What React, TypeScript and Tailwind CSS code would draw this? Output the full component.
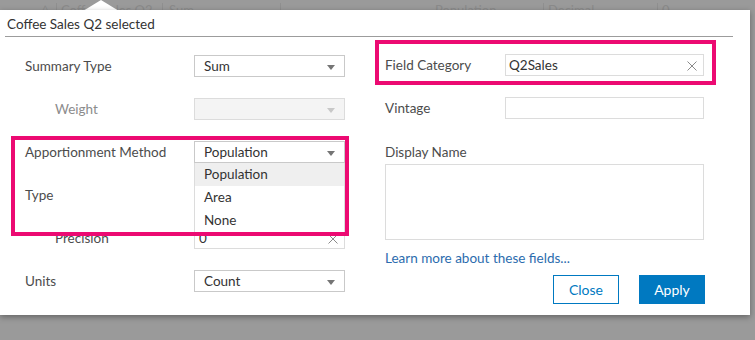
import React from "react";

const font = { fontFamily: "Lato, 'Open Sans', sans-serif" };

function Caret({ light }: { light?: boolean }) {
  return (
    <svg width="8" height="5" viewBox="0 0 8 5" className="absolute right-[9px] top-[9px]">
      <path d="M0 0 L8 0 L4 5 Z" fill={light ? "#c8c8c8" : "#757575"} />
    </svg>
  );
}

function Cross() {
  return (
    <svg width="10" height="10" viewBox="0 0 10 10" className="absolute right-[6px] top-[6px]">
      <path d="M0.5 0.5 L9.5 9.5 M9.5 0.5 L0.5 9.5" stroke="#8a8a8a" strokeWidth="1" />
    </svg>
  );
}

function Select({ value, disabled }: { value?: string; disabled?: boolean }) {
  return (
    <div
      className={`relative h-[22px] w-[151px] border pl-[9px] text-[13.5px] leading-[20px] ${
        disabled ? "border-[#dcdcdc] bg-[#f4f4f4]" : "border-[#c9c9c9] bg-white text-[#333]"
      }`}
    >
      {value}
      <Caret light={disabled} />
    </div>
  );
}

function Row({ label, indent, muted, children }: { label: string; indent?: boolean; muted?: boolean; children: React.ReactNode }) {
  return (
    <div className="flex h-[22px] items-center">
      <div className={`w-[169px] text-[13.5px] ${indent ? "pl-[30px]" : ""} ${muted ? "text-[#8c8c8c]" : "text-[#4c4c4c]"}`}>{label}</div>
      {children}
    </div>
  );
}

export default function App() {
  return (
    <div className="relative h-[340px] w-[755px] overflow-hidden bg-[#9a9a9a]" style={font}>
      {/* faint table behind the popover, cut by the dialog */}
      <div className="flex h-[10px] overflow-hidden pt-[3px] text-[13px] leading-[14px] text-[#8a8a8a]">
        <div className="w-[57px] border-r border-[#8f8f8f] pl-[42px] text-[11px]">^</div>
        <div className="w-[106px] border-r border-[#8f8f8f] pl-[4px]">Coffee Sales Q2 ×</div>
        <div className="w-[118px] border-r border-[#8f8f8f] pl-[6px]">Sum</div>
        <div className="w-[150px] pl-[4px]"></div>
        <div className="w-[113px] border-r border-[#8f8f8f] pl-[4px]">Population</div>
        <div className="w-[114px] border-r border-[#8f8f8f] pl-[4px]">Decimal</div>
        <div className="pl-[4px]">0</div>
      </div>

      {/* popover arrow */}
      <svg width="36" height="11" viewBox="0 0 36 11" className="absolute left-[83px] top-0">
        <path d="M0 11 L18 0 L36 11 Z" fill="#fff" />
      </svg>

      <div className="relative h-[305px] w-[750px] bg-white shadow-[0_2px_6px_rgba(0,0,0,0.35)]">
        <div className="mr-[17px] ml-[5px] h-[27px] border-b border-[#9c9c9c] pl-[2px] pt-[6px] text-[13.5px] leading-[16px] text-[#333]">
          Coffee Sales Q2 selected
        </div>

        <div className="flex pt-[17px]">
          {/* left column */}
          <div className="flex w-[385px] flex-col gap-[21px] pl-[25px] pt-[1px]">
            <Row label="Summary Type">
              <Select value="Sum" />
            </Row>
            <Row label="Weight" indent muted>
              <Select disabled />
            </Row>
            <Row label="Apportionment Method">
              <Select value="Population" />
            </Row>
            <Row label="Type">
              <Select />
            </Row>
            <Row label="Precision" indent>
              <div className="relative h-[22px] w-[151px] border border-[#dcdcdc] pl-[4px] text-[13.5px] leading-[20px] text-[#333]">
                0
                <Cross />
              </div>
            </Row>
            <Row label="Units">
              <Select value="Count" />
            </Row>
          </div>

          {/* right column */}
          <div className="flex w-[320px] flex-col">
            <div className="flex h-[22px] items-center">
              <div className="w-[120px] text-[13.5px] text-[#4c4c4c]">Field Category</div>
              <div className="relative h-[22px] w-[199px] border border-[#dcdcdc] pl-[3px] text-[13.5px] leading-[20px] text-[#333]">
                Q2Sales
                <Cross />
              </div>
            </div>
            <div className="mt-[21px] flex h-[22px] items-center">
              <div className="w-[120px] text-[13.5px] text-[#4c4c4c]">Vintage</div>
              <div className="h-[22px] w-[199px] border border-[#dcdcdc]"></div>
            </div>
            <div className="mt-[25px] text-[13.5px] leading-[16px] text-[#4c4c4c]">Display Name</div>
            <div className="mt-[4px] h-[76px] w-[319px] border border-[#dcdcdc]"></div>
            <div className="mt-[10px] text-[13.5px] leading-[16px] text-[#2b6cae]">Learn more about these fields...</div>
            <div className="mt-[9px] flex justify-end gap-[20px]">
              <button className="h-[29px] w-[66px] border border-[#0079c1] text-[14px] text-[#0079c1]">Close</button>
              <button className="h-[29px] w-[66px] bg-[#0079c1] text-[14px] text-white">Apply</button>
            </div>
          </div>
        </div>

        {/* open dropdown list */}
        <div className="absolute left-[194px] top-[153px] w-[151px] border-x border-[#dcdcdc] bg-white text-[13.5px] text-[#333]">
          <div className="h-[23px] bg-[#efefef] pl-[9px] leading-[23px]">Population</div>
          <div className="h-[23px] pl-[9px] leading-[23px]">Area</div>
          <div className="h-[23px] pl-[9px] leading-[23px]">None</div>
        </div>

        {/* annotation boxes */}
        <div className="pointer-events-none absolute left-[11px] top-[126px] h-[100px] w-[338px] border-4 border-[#ec0a72]"></div>
        <div className="pointer-events-none absolute left-[375px] top-[30px] h-[45px] w-[341px] border-4 border-[#ec0a72]"></div>
      </div>
    </div>
  );
}
